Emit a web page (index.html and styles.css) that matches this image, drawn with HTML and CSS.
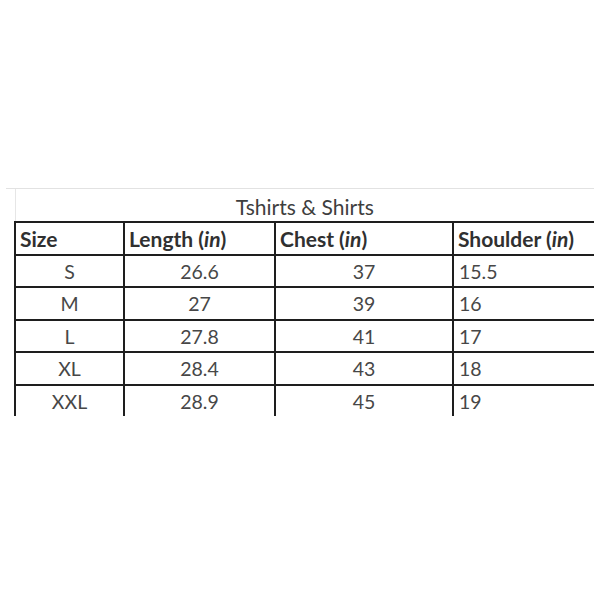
FILE: index.html
```html
<!DOCTYPE html>
<html>
<head>
<meta charset="utf-8">
<link rel="stylesheet" href="styles.css">
</head>
<body>
<div class="sheet">
  <div class="gridline"></div>
  <table class="sizes">
    <colgroup>
      <col class="c1"><col class="c2"><col class="c3"><col class="c4">
    </colgroup>
    <tr class="title-row"><td colspan="4" class="title">Tshirts &amp; Shirts</td></tr>
    <tr class="head">
      <th>Size</th><th>Length (<i>in</i>)</th><th>Chest (<i>in</i>)</th><th>Shoulder (<i>in</i>)</th>
    </tr>
    <tr><td class="ctr">S</td><td class="ctr">26.6</td><td class="ctr">37</td><td>15.5</td></tr>
    <tr><td class="ctr">M</td><td class="ctr">27</td><td class="ctr">39</td><td>16</td></tr>
    <tr><td class="ctr">L</td><td class="ctr">27.8</td><td class="ctr">41</td><td>17</td></tr>
    <tr><td class="ctr">XL</td><td class="ctr">28.4</td><td class="ctr">43</td><td>18</td></tr>
    <tr class="last"><td class="ctr">XXL</td><td class="ctr">28.9</td><td class="ctr">45</td><td>19</td></tr>
  </table>
</div>
</body>
</html>
```
FILE: styles.css
```css
html, body {
  margin: 0;
  padding: 0;
  background: #ffffff;
}
.sheet {
  padding-top: 188px;
  padding-left: 6px;
  font-family: Lato, "Open Sans", sans-serif;
  color: #474747;
}
.gridline {
  width: 588px;
  height: 1px;
  background: #e2e2e2;
}
.sizes {
  margin-left: 8px;
  border-collapse: collapse;
  table-layout: fixed;
  width: 579px;
  font-size: 19.5px;
}
.c1 { width: 109px; }
.c2 { width: 151px; }
.c3 { width: 178px; }
.c4 { width: 141px; }
.sizes td, .sizes th {
  border: 2px solid #1e1e1e;
  border-right: none;
  height: 29.5px;
  padding: 1px 5px 0 5px;
  text-align: left;
  white-space: nowrap;
  line-height: 29px;
}
.sizes td.title {
  border: none;
  border-left: 1px solid #e6e6e6;
  text-align: center;
  height: 28px;
  line-height: 28px;
  padding: 4px 0 0 0;
  font-size: 21px;
  color: #3e3e3e;
}
.sizes th {
  font-weight: bold;
  font-size: 21px;
  color: #303030;
  padding-left: 4px;
}
.sizes th i {
  font-weight: bold;
}
.sizes td.ctr {
  text-align: center;
}
.sizes tr.last td {
  border-bottom: none;
}
```
